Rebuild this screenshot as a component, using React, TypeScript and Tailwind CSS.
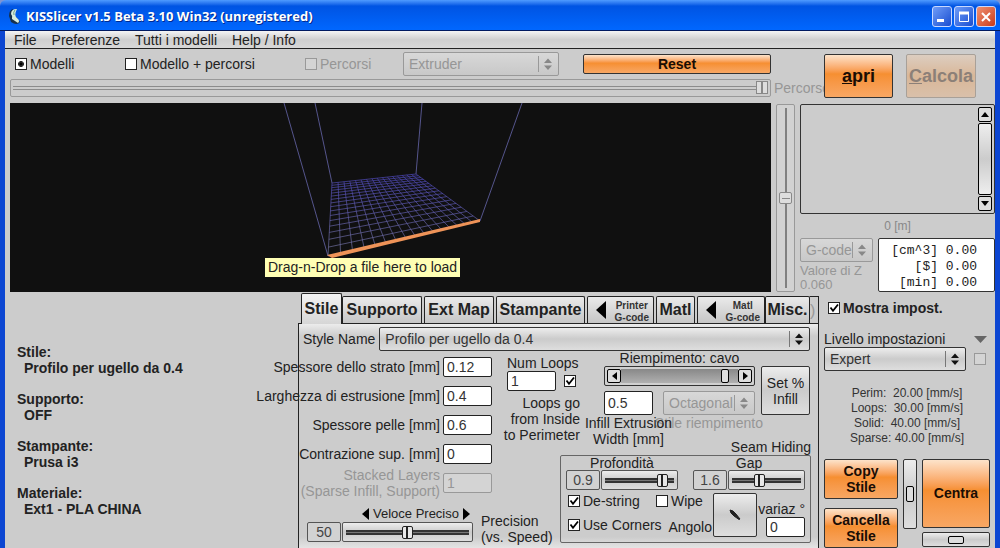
import type { ReactNode } from "react";
import clsx from "clsx";

const face = "bg-linear-to-b from-[#ededed] via-[#cbcbcb] to-[#dedede]";
const orange = "bg-linear-to-b from-[#fce3ca] via-[#f68f31] via-45% to-[#f8a763]";

const profile = [
  { label: "Stile:", value: "Profilo per ugello da 0.4" },
  { label: "Supporto:", value: "OFF" },
  { label: "Stampante:", value: "Prusa i3" },
  { label: "Materiale:", value: "Ext1 - PLA CHINA" },
];

const styleFields = [
  { id: "layer", label: "Spessore dello strato [mm]", value: "0.12" },
  { id: "width", label: "Larghezza di estrusione [mm]", value: "0.4" },
  { id: "skin", label: "Spessore pelle [mm]", value: "0.6" },
  { id: "shrink", label: "Contrazione sup. [mm]", value: "0" },
];

function Check({
  label,
  type = "checkbox",
  name,
  checked,
  disabled,
  bold,
  hideLabel,
}: {
  label: string;
  type?: "checkbox" | "radio";
  name?: string;
  checked?: boolean;
  disabled?: boolean;
  bold?: boolean;
  hideLabel?: boolean;
}) {
  return (
    <label className={clsx("flex items-center gap-[3px] whitespace-nowrap", disabled && "text-[#969696]", bold && "font-bold")}>
      <span className="relative flex h-3 w-3">
        <input
          type={type}
          name={name}
          defaultChecked={checked}
          disabled={disabled}
          aria-label={hideLabel ? label : undefined}
          className="peer h-3 w-3 appearance-none border border-[#222] bg-white disabled:border-[#999] disabled:bg-[#d4d4d4]"
        />
        {type === "radio" ? (
          <span className="pointer-events-none absolute top-1 left-1 hidden h-1 w-1 rounded-full bg-black outline-1 outline-black peer-checked:block" />
        ) : (
          <svg viewBox="0 0 12 12" className="pointer-events-none absolute inset-0 hidden peer-checked:block">
            <path d="M2.5 5.5 L5 8.8 L10 2.5" fill="none" stroke="#000" strokeWidth="1.8" />
          </svg>
        )}
      </span>
      {!hideLabel && label}
    </label>
  );
}

function Select({ label, value, disabled, className }: { label: string; value: string; disabled?: boolean; className?: string }) {
  const ink = disabled ? "#888" : "#111";
  return (
    <div className={clsx("relative", className)}>
      <select
        aria-label={label}
        disabled={disabled}
        className={clsx(
          "h-6 w-full appearance-none rounded-xs border pl-[5px] text-[14px] opacity-100",
          disabled ? "border-[#999] bg-linear-to-b from-[#d8d8d8] to-[#c8c8c8] text-[#969696]" : "border-[#333] text-[#333]",
          !disabled && face
        )}
      >
        <option>{value}</option>
      </select>
      <svg width="18" height="16" viewBox="0 0 18 16" className="pointer-events-none absolute top-1 right-1">
        <path d="M1.5 0 V16" stroke={disabled ? "#999" : "#777"} />
        <path d="M7 7 L11 2.5 L15 7 Z M7 9.5 L11 14 L15 9.5 Z" fill={ink} />
      </svg>
    </div>
  );
}

function Field({ id, value, label, disabled, gray }: { id: string; value: string; label?: string; disabled?: boolean; gray?: boolean }) {
  return (
    <input
      id={id}
      defaultValue={value}
      disabled={disabled}
      aria-label={label}
      className={clsx(
        "h-5 shrink-0 rounded-xs border px-[3px] text-[14px]",
        gray ? "w-[34px] border-[#555] bg-[#d2d2d2] text-center text-[#444]" : "w-[49px]",
        !gray && (disabled ? "border-[#999] bg-[#d4d4d4] text-[#969696]" : "border-[#222] bg-white text-[#333]")
      )}
    />
  );
}

function Slider({ label, value }: { label: string; value: number }) {
  return (
    <input
      type="range"
      aria-label={label}
      defaultValue={value}
      className={clsx(
        "h-5 w-0 min-w-0 flex-1 appearance-none rounded-xs border border-[#555] px-[3px]",
        "[&::-webkit-slider-runnable-track]:h-[5px] [&::-webkit-slider-runnable-track]:border-y-2 [&::-webkit-slider-runnable-track]:border-[#333] [&::-webkit-slider-runnable-track]:bg-[#777]",
        "[&::-webkit-slider-thumb]:-mt-[6px] [&::-webkit-slider-thumb]:h-[13px] [&::-webkit-slider-thumb]:w-[11px] [&::-webkit-slider-thumb]:appearance-none [&::-webkit-slider-thumb]:rounded-xs [&::-webkit-slider-thumb]:border [&::-webkit-slider-thumb]:border-[#222] [&::-webkit-slider-thumb]:bg-[linear-gradient(to_right,#e8e8e8_35%,#222_35%,#222_60%,#e8e8e8_60%)]",
        face
      )}
    />
  );
}

function OrangeButton({ children, className }: { children: ReactNode; className?: string }) {
  return (
    <button className={clsx("rounded-xs border border-[#333] text-center font-bold text-[#1a0d04]", orange, className)}>{children}</button>
  );
}

function Tab({ children, className, active }: { children: ReactNode; className?: string; active?: boolean }) {
  return (
    <button
      role="tab"
      aria-selected={!!active}
      className={clsx(
        "shrink-0 rounded-t-xs border-x border-t border-[#222] font-bold whitespace-nowrap",
        active ? "z-10 -mb-px h-[31px] bg-linear-to-b from-[#f2f2f2] to-[#d6d6d6] text-[16px]" : "h-[27px] bg-linear-to-b from-[#eaeaea] to-[#c6c6c6]",
        className
      )}
    >
      {children}
    </button>
  );
}

function GcodeTab({ name, className }: { name: string; className: string }) {
  return (
    <Tab className={clsx("flex items-center justify-between pr-1 pl-2", className)}>
      <svg width="10" height="18" viewBox="0 0 10 18">
        <path d="M10 0 V18 L0 9 Z" />
      </svg>
      <span className="pt-1 text-[10px] leading-3 text-[#333]">
        {name}
        <br />
        G-code
      </span>
    </Tab>
  );
}

// Corners of the print bed as seen by the camera: front/back, left/right
const FL = [318, 153];
const BL = [322, 80];
const BR = [406, 71];
const FR = [470, 118];

// Maps (u, v) on the bed, both 0..1, to a point in the viewport
function project(u: number, v: number) {
  const dx1 = FR[0] - BR[0];
  const dx2 = BL[0] - BR[0];
  const sx = FL[0] - FR[0] + BR[0] - BL[0];
  const dy1 = FR[1] - BR[1];
  const dy2 = BL[1] - BR[1];
  const sy = FL[1] - FR[1] + BR[1] - BL[1];
  const det = dx1 * dy2 - dx2 * dy1;
  const g = (sx * dy2 - dx2 * sy) / det;
  const h = (dx1 * sy - sx * dy1) / det;
  const w = g * u + h * v + 1;
  const x = (FR[0] - FL[0] + g * FR[0]) * u + (BL[0] - FL[0] + h * BL[0]) * v + FL[0];
  const y = (FR[1] - FL[1] + g * FR[1]) * u + (BL[1] - FL[1] + h * BL[1]) * v + FL[1];
  return `${(x / w).toFixed(1)} ${(y / w).toFixed(1)}`;
}

function Viewport() {
  const steps = Array.from({ length: 17 }, (_, i) => i / 16);
  return (
    <div className="relative flex-1 overflow-hidden bg-[#101010]">
      <svg width="761" height="189" viewBox="0 0 761 189" fill="none">
        <defs>
          <linearGradient id="bed" gradientUnits="userSpaceOnUse" x1="0" y1="71" x2="0" y2="153">
            <stop offset="0" stopColor="#4a44b4" />
            <stop offset="1" stopColor="#74749c" />
          </linearGradient>
        </defs>
        <path d="M274 0 L318 153 M305 0 L322 80 M412 0 L406 71 M512 0 L470 118" stroke="#55558c" />
        {steps.map((t) => (
          <path key={t} d={`M${project(t, 0)} L${project(t, 1)} M${project(0, t)} L${project(1, t)}`} stroke="url(#bed)" strokeWidth="0.7" />
        ))}
        <path d="M317 152 L470 116 L470 119 L322 155 Z" fill="#ee9358" />
      </svg>
      <div className="absolute top-[155px] left-[255px] bg-[#ffffb4] px-[3px] text-[14px] leading-[19px] whitespace-nowrap">
        Drag-n-Drop a file here to load
      </div>
    </div>
  );
}

function TitleBar() {
  const box = "flex h-[21px] w-5 items-center justify-center rounded-[3px] border border-[#c8d8ff]";
  return (
    <header className="flex h-[31px] items-center justify-between rounded-t-md border-b border-[#001a60] bg-linear-to-b from-[#4f9bff] via-[#0054e3] via-20% to-[#0067ff] pt-[3px] pr-1 pl-2">
      <div className="flex items-center gap-[5px]">
        <svg width="13" height="18" viewBox="0 0 13 18">
          <path d="M5 1 Q1 2 1 8 L3 14 Q9 18 12 14 L9 10 L5 7 Z" fill="#16304c" />
          <path d="M9 1 Q3 1 3 6 Q5 8 4 11 L10 15 Q12 13 10 11 Q5 8 9 1 Z" fill="#d8ecdc" />
          <path d="M7 2 Q5 4 6 7" stroke="#6f9c86" fill="none" />
        </svg>
        <h1 className="font-['Open_Sans',sans-serif] text-[13px] font-bold whitespace-nowrap text-white [text-shadow:1px_1px_#002a90]">
          KISSlicer v1.5 Beta 3.10 Win32 (unregistered)
        </h1>
      </div>
      <div className="flex gap-[2px]">
        <button aria-label="Minimize" className={clsx(box, "bg-linear-to-br from-[#6f9cf8] to-[#1a4cd0]")}>
          <svg width="12" height="12">
            <path d="M1 9.5 H8" stroke="#fff" strokeWidth="3" />
          </svg>
        </button>
        <button aria-label="Maximize" className={clsx(box, "bg-linear-to-br from-[#6f9cf8] to-[#1a4cd0]")}>
          <svg width="12" height="12" fill="none" stroke="#fff">
            <path d="M1.5 2 V10.5 H10.5 V2" />
            <path d="M1 2 H11" strokeWidth="3" />
          </svg>
        </button>
        <button aria-label="Close" className={clsx(box, "bg-linear-to-br from-[#f09070] to-[#c83818]")}>
          <svg width="12" height="12">
            <path d="M2 2 L10 10 M10 2 L2 10" stroke="#fff" strokeWidth="2" />
          </svg>
        </button>
      </div>
    </header>
  );
}

function Toolbar() {
  return (
    <section className="flex h-[54px] pl-[5px]">
      <div className="min-w-0 flex-1">
        <div className="flex h-[30px] items-center pr-[53px] pl-[5px]">
          <div className="w-[110px]">
            <Check type="radio" name="view" label="Modelli" checked />
          </div>
          <div className="w-[180px]">
            <Check type="radio" name="view" label="Modello + percorsi" />
          </div>
          <div className="w-[98px]">
            <Check type="radio" name="view" label="Percorsi" disabled />
          </div>
          <Select label="Extruder" value="Extruder" disabled className="w-[156px]" />
          <OrangeButton className="ml-6 h-5 flex-1 text-[14px] leading-none">Reset</OrangeButton>
        </div>
        <div className="flex items-center gap-[3px]">
          <input
            id="path"
            type="range"
            disabled
            defaultValue={100}
            className="h-[18px] min-w-0 flex-1 appearance-none rounded-xs border border-[#999] px-[2px] [&::-webkit-slider-runnable-track]:h-[4px] [&::-webkit-slider-runnable-track]:border-y [&::-webkit-slider-runnable-track]:border-[#8c8c8c] [&::-webkit-slider-thumb]:-mt-[6px] [&::-webkit-slider-thumb]:h-[13px] [&::-webkit-slider-thumb]:w-[12px] [&::-webkit-slider-thumb]:appearance-none [&::-webkit-slider-thumb]:border [&::-webkit-slider-thumb]:border-[#888] [&::-webkit-slider-thumb]:bg-[linear-gradient(to_right,#ddd_40%,#888_40%,#888_60%,#ddd_60%)]"
          />
          <label htmlFor="path" className="w-[50px] overflow-hidden leading-[18px] text-[#969696]">
            Percorso
          </label>
        </div>
      </div>
      <div className="flex w-[171px] gap-[13px] pt-[5px]">
        <OrangeButton className="h-11 w-[69px] text-[18px]">
          <u>a</u>pri
        </OrangeButton>
        <button
          disabled
          className="h-11 w-[70px] rounded-xs border border-[#a8a098] bg-linear-to-b from-[#dccdc0] via-[#d9b798] to-[#d9c0aa] text-[18px] font-bold whitespace-nowrap text-[#8c8078]"
        >
          <u>C</u>alcola
        </button>
      </div>
    </section>
  );
}

function OutputColumn() {
  const arrow = "flex h-[15px] items-center justify-center rounded-xs border border-black bg-[#ddd]";
  return (
    <div className="w-[195px]">
      <div className="mt-px flex h-[110px] justify-end rounded-xs border border-[#333] p-[2px]">
        <div className="flex w-[14px] flex-col">
          <button aria-label="Scroll up" className={arrow}>
            <svg width="8" height="5">
              <path d="M0 5 L4 0 L8 5 Z" />
            </svg>
          </button>
          <div className="my-px flex-1 rounded-xs border border-black bg-linear-to-b from-[#eee] via-[#ccc] to-[#eee]" />
          <button aria-label="Scroll down" className={arrow}>
            <svg width="8" height="5">
              <path d="M0 0 L4 5 L8 0 Z" />
            </svg>
          </button>
        </div>
      </div>
      <p className="h-6 pt-[3px] text-center text-[12px] leading-[18px] text-[#888]">0 [m]</p>
      <div className="flex justify-between text-[13px]">
        <div className="w-[73px] text-[#969696]">
          <Select label="G-code" value="G-code" disabled />
          <p className="pt-px leading-[15px]">Valore di Z</p>
          <p className="leading-[13px]">0.060</p>
        </div>
        <pre className="w-[117px] rounded-xs border border-[#333] bg-white pt-1 pr-[17px] text-right font-['Liberation_Mono',monospace] leading-4 text-[#222]">
          {"[cm^3] 0.00\n[$] 0.00\n[min] 0.00"}
        </pre>
      </div>
    </div>
  );
}

function StyleTabs() {
  return (
    <div role="tablist" className="flex items-end gap-[2px] pl-[3px] text-[16px]">
      <div className="flex items-end">
        <Tab active className="w-[41px]">Stile</Tab>
        <Tab className="w-20">Supporto</Tab>
      </div>
      <Tab className="w-[70px]">Ext Map</Tab>
      <Tab className="w-[89px]">Stampante</Tab>
      <GcodeTab name="Printer" className="w-[67px]" />
      <Tab className="w-[39px]">Matl</Tab>
      <div className="flex flex-1 items-end">
        <GcodeTab name="Matl" className="w-[68px]" />
        <Tab className="w-[45px]">Misc.</Tab>
        <span className="h-[27px] flex-1 border-t border-r border-[#222] leading-[27px] text-[#999]">)</span>
      </div>
    </div>
  );
}

function PrintFields() {
  return (
    <div className="w-[261px]">
      <div className="flex gap-[15px]">
        <div className="flex w-[193px] flex-col gap-[9px] pt-[6px] leading-5">
          {styleFields.map((f) => (
            <div key={f.id} className="flex items-center justify-end gap-[3px]">
              <label htmlFor={f.id} className="whitespace-nowrap">{f.label}</label>
              <Field id={f.id} value={f.value} />
            </div>
          ))}
          <div className="-mt-[6px] flex items-center justify-end gap-[3px] text-[#969696]">
            <label htmlFor="stacked" className="text-right leading-4 whitespace-nowrap">
              Stacked Layers
              <br />
              (Sparse Infill, Support)
            </label>
            <Field id="stacked" value="1" disabled />
          </div>
        </div>
        <div className="-mr-5 w-[73px] shrink-0 pt-1">
          <label htmlFor="loops" className="block leading-4 whitespace-nowrap">Num Loops</label>
          <div className="flex items-center gap-2">
            <Field id="loops" value="1" />
            <Check label="Loops" hideLabel checked />
          </div>
          <p className="mt-1 flex justify-end text-right leading-4 whitespace-nowrap">
            Loops go
            <br />
            from Inside
            <br />
            to Perimeter
          </p>
        </div>
      </div>
      <div className="mt-[7px] flex items-end gap-2 pl-2">
        <div className="w-[166px]">
          <div className="flex items-center justify-end gap-1 pr-[3px] text-[13px] leading-4">
            <svg width="7" height="12"><path d="M7 0 V12 L0 6 Z" /></svg>
            <span>Veloce Preciso</span>
            <svg width="7" height="12"><path d="M0 0 V12 L7 6 Z" /></svg>
          </div>
          <div className="flex gap-px">
            <Field id="precision" value="50" gray />
            <Slider label="Precisione" value={50} />
          </div>
        </div>
        <label htmlFor="precision" className="-mb-[3px] leading-4 whitespace-nowrap">
          Precision
          <br />
          (vs. Speed)
        </label>
      </div>
    </div>
  );
}

function InfillGroup() {
  const arrow = "flex h-[14px] w-[14px] shrink-0 items-center justify-center rounded-xs border border-black bg-[#ddd]";
  return (
    <div className="pl-11 pr-2">
      <p className="w-[151px] text-center leading-[15px] whitespace-nowrap">Riempimento: cavo</p>
      <div className="flex justify-between">
        <div className="w-[151px]">
          <div className="flex h-5 items-center rounded-xs border border-[#333] bg-[#d0d0d0] px-[2px]">
            <button aria-label="Meno riempimento" className={arrow}>
              <svg width="5" height="8"><path d="M5 0 V8 L0 4 Z" /></svg>
            </button>
            <input
              type="range"
              aria-label="Riempimento"
              defaultValue={92}
              className="h-[14px] w-0 min-w-0 flex-1 appearance-none bg-linear-to-b from-[#888] to-[#b0b0b0] [&::-webkit-slider-thumb]:h-[14px] [&::-webkit-slider-thumb]:w-2 [&::-webkit-slider-thumb]:appearance-none [&::-webkit-slider-thumb]:rounded-xs [&::-webkit-slider-thumb]:border [&::-webkit-slider-thumb]:border-black [&::-webkit-slider-thumb]:bg-[#ddd]"
            />
            <button aria-label="Più riempimento" className={arrow}>
              <svg width="5" height="8"><path d="M0 0 V8 L5 4 Z" /></svg>
            </button>
          </div>
          <div className="mt-[5px] flex justify-between">
            <input
              id="infill"
              defaultValue="0.5"
              className="h-6 w-[49px] rounded-xs border border-[#222] bg-white px-[3px] text-[#333]"
            />
            <Select label="Stile riempimento" value="Octagonal" disabled className="w-[92px]" />
          </div>
        </div>
        <button className={clsx("h-[49px] w-[49px] rounded-xs border border-[#333] leading-4", face)}>
          Set % Infill
        </button>
      </div>
      <div className="flex h-[25px] justify-between leading-4 whitespace-nowrap">
        <label htmlFor="infill" className="z-10 flex w-[49px] justify-center text-center">
          <span>
            Infill Extrusion
            <br />
            Width [mm]
          </span>
        </label>
        <span className="pr-[47px] text-[#969696]">Stile riempimento</span>
      </div>
    </div>
  );
}

function SeamGroup() {
  return (
    <div className="pr-[7px]">
      <h2 className="text-right leading-[15px]">Seam Hiding</h2>
      <div className="h-[88px] rounded-xs border border-[#666] px-[5px]">
        <div className="flex justify-between">
          {[
            { id: "depth", label: "Profondità", value: "0.9", pos: 90 },
            { id: "gap", label: "Gap", value: "1.6", pos: 38 },
          ].map((s) => (
            <div key={s.id} className="w-[112px]">
              <label htmlFor={s.id} className="block text-center leading-[14px]">{s.label}</label>
              <div className="flex gap-px">
                <Field id={s.id} value={s.value} gray />
                <Slider label={s.label} value={s.pos} />
              </div>
            </div>
          ))}
        </div>
        <div className="mt-[3px] flex justify-between">
          <div className="flex flex-1 flex-col gap-[6px] pr-px pl-[2px] leading-4">
            <div className="flex">
              <div className="w-[88px]">
                <Check label="De-string" checked />
              </div>
              <Check label="Wipe" />
            </div>
            <div className="flex items-center justify-between">
              <Check label="Use Corners" checked />
              <span className="pt-1">Angolo</span>
            </div>
          </div>
          <button aria-label="Angolo" className={clsx("flex h-11 w-11 items-center justify-center rounded-xs border border-[#333]", face)}>
            <svg width="20" height="20">
              <path d="M5 5 Q8 5 11 9 L15 14 L14 14.5 L9 11 Q5 8 5 5 Z" fill="#222" stroke="#222" />
            </svg>
          </button>
          <div className="flex w-12 flex-col items-end pt-2">
            <label htmlFor="jitter" className="leading-4 whitespace-nowrap">variaz °</label>
            <input id="jitter" defaultValue="0" className="h-5 w-[39px] rounded-xs border border-[#222] bg-white px-[3px] text-[#333]" />
          </div>
        </div>
      </div>
    </div>
  );
}

function SidePanel() {
  return (
    <div className="w-[176px] pt-2 pr-[5px] pl-[5px]">
      <div className="pl-1 leading-4">
        <Check label="Mostra impost." checked bold />
      </div>
      <div className="mt-[15px] flex items-center justify-between pr-[3px] leading-4">
        <span>Livello impostazioni</span>
        <svg width="13" height="7">
          <path d="M0 0 H13 L6.5 7 Z" fill="#666" />
        </svg>
      </div>
      <div className="flex items-center justify-between pr-1">
        <Select label="Livello impostazioni" value="Expert" className="w-[142px]" />
        <Check label="Opzione" hideLabel disabled />
      </div>
      <p className="mt-[15px] text-center text-[12px] leading-[15px] whitespace-pre text-[#333]">
        {"Perim:  20.00 [mm/s]\nLoops:  30.00 [mm/s]\nSolid:  40.00 [mm/s]\nSparse: 40.00 [mm/s]"}
      </p>
      <div className="mt-[13px] flex justify-between">
        <div className="flex w-[74px] flex-col gap-[9px]">
          <OrangeButton className="h-10 leading-4">
            Copy
            <br />
            Stile
          </OrangeButton>
          <OrangeButton className="h-10 leading-4">
            Cancella
            <br />
            Stile
          </OrangeButton>
        </div>
        <div className={clsx("flex h-[70px] w-[14px] items-center justify-center rounded-xs border border-[#333]", face)}>
          <span className="h-4 w-2 rounded-xs border border-black bg-[#ddd]" />
        </div>
        <div className="flex w-[68px] flex-col gap-1">
          <OrangeButton className="h-[69px]">Centra</OrangeButton>
          <div className={clsx("flex h-[15px] items-center justify-center rounded-xs border border-[#333]", face)}>
            <span className="h-2 w-4 rounded-xs border border-black bg-[#ddd]" />
          </div>
        </div>
      </div>
    </div>
  );
}

export default function App() {
  return (
    <div className="flex min-h-screen flex-col bg-[#7c94d4] font-['Liberation_Sans',Arial,sans-serif] text-[14px] text-[#222]">
      <TitleBar />
      <div className="flex flex-1 flex-col border-x-[5px] border-[#0c46d2] bg-[#cccccc]">
        <nav className="flex h-[18px] items-center gap-[15px] border-b border-[#222] bg-linear-to-b from-[#f4f4f4] via-[#cfcfcf] to-[#d8d8d8] pl-[9px] leading-none">
          {["File", "Preferenze", "Tutti i modelli", "Help / Info"].map((item) => (
            <button key={item}>{item}</button>
          ))}
        </nav>
        <Toolbar />
        <section className="flex h-[189px] gap-[5px] pl-[5px]">
          <Viewport />
          <div className="relative mt-px flex w-[19px] items-center justify-center rounded-xs border border-[#999] bg-[#d2d2d2] py-[3px]">
            <span className="h-full w-[2px] bg-[#808080]" />
            <button
              aria-label="Valore di Z"
              disabled
              className="absolute flex h-3 w-[13px] items-center justify-center rounded-xs border border-[#888] bg-[#ddd]"
            >
              <span className="h-px w-2 bg-[#888]" />
            </button>
          </div>
          <OutputColumn />
        </section>
        <main className="flex flex-1">
          <aside className="flex min-w-0 flex-1 flex-col gap-[15px] pt-[52px] pl-3 leading-4 font-bold">
            {profile.map((p) => (
              <div key={p.label}>
                <p>{p.label}</p>
                <p className="pl-[7px]">{p.value}</p>
              </div>
            ))}
          </aside>
          <section className="flex w-[521px] flex-col pt-px">
            <StyleTabs />
            <div className="flex-1 border-x border-t border-[#222] bg-[linear-gradient(#ececec,#ccc_12px,#ccc_95%,#e4e4e4)] pt-[3px]">
              <div className="flex items-center gap-1 pr-2 pl-1">
                <span>Style Name</span>
                <Select label="Style Name" value="Profilo per ugello da 0.4" className="flex-1" />
              </div>
              <div className="flex">
                <PrintFields />
                <div className="flex-1">
                  <InfillGroup />
                  <SeamGroup />
                </div>
              </div>
            </div>
          </section>
          <SidePanel />
        </main>
      </div>
    </div>
  );
}
